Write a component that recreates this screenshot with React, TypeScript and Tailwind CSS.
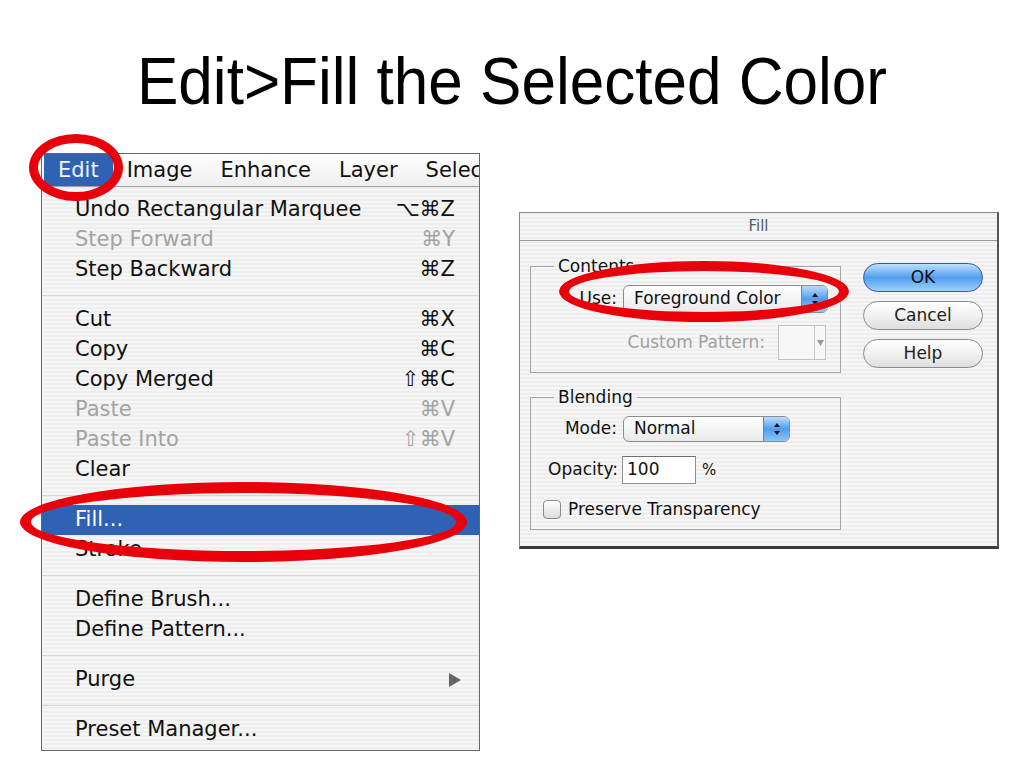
import React from "react";

type Item =
  | { label: string; shortcut?: string; dim?: boolean; active?: boolean; sub?: boolean }
  | "sep";

const items: Item[] = [
  { label: "Undo Rectangular Marquee", shortcut: "⌥⌘Z" },
  { label: "Step Forward", shortcut: "⌘Y", dim: true },
  { label: "Step Backward", shortcut: "⌘Z" },
  "sep",
  { label: "Cut", shortcut: "⌘X" },
  { label: "Copy", shortcut: "⌘C" },
  { label: "Copy Merged", shortcut: "⇧⌘C" },
  { label: "Paste", shortcut: "⌘V", dim: true },
  { label: "Paste Into", shortcut: "⇧⌘V", dim: true },
  { label: "Clear" },
  "sep",
  { label: "Fill...", active: true },
  { label: "Stroke..." },
  "sep",
  { label: "Define Brush..." },
  { label: "Define Pattern..." },
  "sep",
  { label: "Purge", sub: true },
  "sep",
  { label: "Preset Manager..." },
];

const stripes =
  "bg-[repeating-linear-gradient(180deg,#eeeeee_0px,#eeeeee_2px,#f6f6f6_2px,#f6f6f6_4px)]";

function Stepper() {
  return (
    <div className="w-[26px] h-full flex items-center justify-center border-l border-[#5a84c4] bg-gradient-to-b from-[#b9dcfc] via-[#4f9df0] to-[#8cc4f6]">
      <svg width="8" height="14" viewBox="0 0 8 14">
        <polygon points="4,1 7,5 1,5" fill="#111" />
        <polygon points="1,9 7,9 4,13" fill="#111" />
      </svg>
    </div>
  );
}

function EditMenu() {
  return (
    <div className="relative w-[439px] border border-[#666] bg-[#f2f2f2] font-['DejaVu_Sans',sans-serif] text-[21px]">
      {/* menu bar, last title is clipped like in the screenshot */}
      <div className="h-[33px] flex items-stretch pl-[2px] border-b border-[#a0a0a0] bg-gradient-to-b from-white to-[#efefef] overflow-hidden whitespace-nowrap">
        <div className="px-[14px] pt-[2px] flex items-center bg-[#2f62b3] text-[#eef3ff]">Edit</div>
        <div className="px-[14px] pt-[2px] flex items-center text-[#111]">Image</div>
        <div className="px-[14px] pt-[2px] flex items-center text-[#111]">Enhance</div>
        <div className="px-[14px] pt-[2px] flex items-center text-[#111]">Layer</div>
        <div className="pl-[14px] pt-[2px] flex items-center text-[#111]">Selec</div>
      </div>

      <div className={`pt-[8px] pb-[5px] ${stripes}`}>
        {items.map((it, i) =>
          it === "sep" ? (
            <div key={i} className="h-[20px] flex items-center">
              <div className="h-px w-full bg-[#d4d4d4]" />
            </div>
          ) : (
            <div
              key={i}
              className={`h-[30px] flex items-center justify-between pl-[33px] pr-[24px] whitespace-nowrap ${
                it.active ? "bg-[#2f62b3] text-white" : it.dim ? "text-[#a3a3a3]" : "text-[#111]"
              }`}
            >
              <span>{it.label}</span>
              {it.shortcut && <span>{it.shortcut}</span>}
              {it.sub && (
                <svg width="14" height="16" viewBox="0 0 14 16" className="mr-[-7px]">
                  <polygon points="1,1 13,8 1,15" fill="#666" />
                </svg>
              )}
            </div>
          )
        )}
      </div>

      <div className="absolute left-[-13px] top-[-20px] w-[94px] h-[67px] rounded-[50%] border-[9px] border-[#e8000b]" />
      <div className="absolute left-[-22px] top-[328px] w-[447px] h-[80px] rounded-[50%] border-[11px] border-[#e8000b]" />
    </div>
  );
}

function AquaButton({ label, primary }: { label: string; primary?: boolean }) {
  return (
    <div
      className={`h-[29px] w-[120px] rounded-full flex items-center justify-center text-[17px] ${
        primary
          ? "border border-[#34569a] bg-gradient-to-b from-[#bfe0fd] via-[#4f9ef0] to-[#9fd0fa] text-[#111]"
          : "border border-[#8a8a8a] bg-gradient-to-b from-white via-[#f1f1f1] to-[#dedede] text-[#222]"
      }`}
    >
      {label}
    </div>
  );
}

function FillDialog() {
  return (
    <div
      className={`relative w-[480px] border border-[#8a8a8a] border-r-2 border-r-[#555] border-b-[3px] border-b-[#3a3a3a] font-['DejaVu_Sans',sans-serif] text-[17px] text-[#111] ${stripes}`}
    >
      <div className="h-[28px] border-b border-[#9a9a9a] flex items-center justify-center text-[15px] text-[#5a5a5a]">
        Fill
      </div>

      <div className="flex pl-[10px] pt-[15px] pb-[16px]">
        <div className="w-[311px] flex flex-col gap-[14px]">
          <fieldset className="border border-[#a6a6a6] pb-[12px]">
            <legend className="ml-[23px] px-[4px] leading-[20px]">Contents</legend>
            <div className="mt-[9px] flex items-center">
              <span className="w-[86px] text-right">Use:</span>
              <div className="ml-[6px] w-[205px] h-[28px] flex rounded-[6px] border border-[#8d8d8d] overflow-hidden bg-gradient-to-b from-white to-[#e9e9e9]">
                <span className="flex-1 pl-[10px] flex items-center">Foreground Color</span>
                <Stepper />
              </div>
            </div>
            <div className="mt-[12px] flex items-center justify-end pr-[14px]">
              <span className="text-[#a0a0a0]">Custom Pattern:</span>
              <div className="ml-[13px] w-[48px] h-[35px] flex border border-[#c2c2c2] bg-[#f7f7f7]">
                <div className="w-[36px] border-r border-[#c8c8c8]" />
                <div className="flex-1 flex items-center justify-center">
                  <svg width="7" height="6" viewBox="0 0 7 6">
                    <polygon points="0,0 7,0 3.5,6" fill="#9a9a9a" />
                  </svg>
                </div>
              </div>
            </div>
          </fieldset>

          <fieldset className="border border-[#a6a6a6] pb-[10px]">
            <legend className="ml-[23px] px-[4px] leading-[20px]">Blending</legend>
            <div className="mt-[9px] flex items-center">
              <span className="w-[86px] text-right">Mode:</span>
              <div className="ml-[6px] w-[167px] h-[26px] flex rounded-[6px] border border-[#8d8d8d] overflow-hidden bg-gradient-to-b from-white to-[#e9e9e9]">
                <span className="flex-1 pl-[10px] flex items-center">Normal</span>
                <Stepper />
              </div>
            </div>
            <div className="mt-[14px] flex items-center">
              <span className="w-[87px] text-right">Opacity:</span>
              <div className="ml-[4px] w-[74px] h-[28px] border border-[#8f8f8f] border-t-[#6f6f6f] bg-white flex items-center pl-[4px]">
                100
              </div>
              <span className="ml-[6px] text-[15px]">%</span>
            </div>
            <div className="mt-[16px] h-[19px] flex items-center pl-[12px]">
              <div className="w-[18px] h-[19px] rounded-[4px] border border-[#8a8a8a] bg-gradient-to-b from-white to-[#dcdcdc]" />
              <span className="ml-[7px]">Preserve Transparency</span>
            </div>
          </fieldset>
        </div>

        <div className="ml-[22px] mt-[7px] flex flex-col gap-[9px]">
          <AquaButton label="OK" primary />
          <AquaButton label="Cancel" />
          <AquaButton label="Help" />
        </div>
      </div>

      <div className="absolute left-[39px] top-[48px] w-[290px] h-[61px] rounded-[50%] border-[10px] border-[#e8000b]" />
    </div>
  );
}

export default function App() {
  return (
    <div className="w-[1024px] h-[768px] bg-white overflow-hidden">
      <h1 className="mt-[48px] text-center text-[66px] leading-none text-black font-['Liberation_Sans',Arial,sans-serif] scale-x-[0.94]">
        Edit&gt;Fill the Selected Color
      </h1>

      <div className="mt-[39px] flex items-start">
        <div className="ml-[41px]">
          <EditMenu />
        </div>
        <div className="ml-[39px] mt-[59px]">
          <FillDialog />
        </div>
      </div>
    </div>
  );
}
